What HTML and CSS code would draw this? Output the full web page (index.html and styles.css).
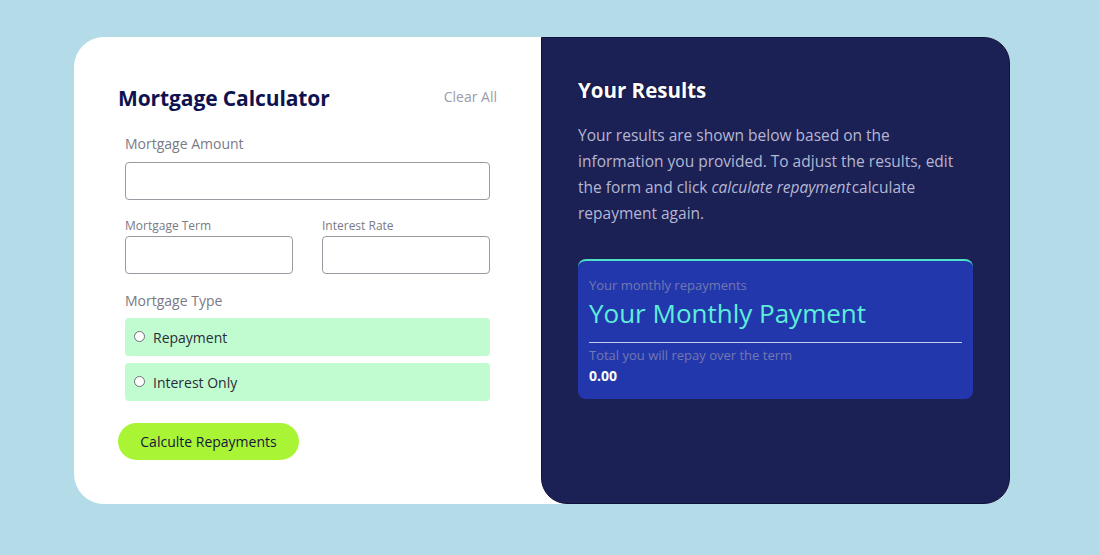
FILE: index.html
```html
<!DOCTYPE html>
<html lang="en">
<head>
<meta charset="utf-8">
<title>Mortgage Calculator</title>
<link rel="stylesheet" href="styles.css">
</head>
<body>
<main class="card">
  <section class="form-panel">
    <div class="form-head">
      <h1 class="title">Mortgage Calculator</h1>
      <a class="clear" href="#">Clear All</a>
    </div>
    <div class="fields">
      <label class="label">Mortgage Amount</label>
      <input class="input" type="text">
      <div class="row">
        <div class="col">
          <label class="label small">Mortgage Term</label>
          <input class="input" type="text">
        </div>
        <div class="col">
          <label class="label small">Interest Rate</label>
          <input class="input" type="text">
        </div>
      </div>
      <label class="label type-label">Mortgage Type</label>
      <label class="option"><span class="radio"></span>Repayment</label>
      <label class="option"><span class="radio"></span>Interest Only</label>
    </div>
    <button class="submit" type="button">Calculte Repayments</button>
  </section>
  <section class="results-panel">
    <h2 class="results-title">Your Results</h2>
    <p class="results-text">Your results are shown below based on the information you provided. To adjust the results, edit the form and click <em class="em">calculate repayment</em>calculate repayment again.</p>
    <div class="result-box">
      <div class="muted">Your monthly repayments</div>
      <div class="big">Your Monthly Payment</div>
      <hr class="divider">
      <div class="muted">Total you will repay over the term</div>
      <div class="total">0.00</div>
    </div>
  </section>
</main>
</body>
</html>
```
FILE: styles.css
```css
* { box-sizing: border-box; }
html, body { margin: 0; padding: 0; }
body {
  background: #b3dbe8;
  font-family: "Open Sans", "Noto Sans", sans-serif;
  width: 1100px;
  height: 555px;
  padding: 37px 0 0 74px;
}
.card {
  display: flex;
  width: 936px;
  height: 467px;
  background: #ffffff;
  border-radius: 30px 26px 26px 30px;
}
.form-panel {
  width: 468px;
  padding: 44px 44px 0 44px;
  display: flex;
  flex-direction: column;
}
.form-head {
  display: flex;
  justify-content: space-between;
  align-items: center;
  height: 34px;
  margin-bottom: 17px;
}
.title {
  margin: 0;
  font-size: 21px;
  font-weight: 700;
  color: #10124f;
  letter-spacing: -0.1px;
}
.clear {
  color: #9a9ca8;
  font-size: 14px;
  text-decoration: none;
  margin-top: -4px;
}
.fields {
  padding: 0 7px;
  display: flex;
  flex-direction: column;
}
.label {
  display: block;
  color: #7a7a86;
  font-size: 14px;
  line-height: 20px;
  margin-top: 2px;
  margin-bottom: 8px;
}
.label.small {
  font-size: 12px;
  line-height: 16px;
  margin: 0 0 2px 0;
}
.input {
  display: block;
  width: 100%;
  height: 38px;
  border: 1px solid #9a9aa2;
  border-radius: 4px;
  background: #fff;
  font: inherit;
}
.row {
  display: flex;
  gap: 29px;
  margin-top: 18px;
}
.col { flex: 1; }
.type-label {
  margin-top: 17px;
  margin-bottom: 7px;
}
.option {
  display: flex;
  align-items: center;
  height: 38px;
  background: #c1fcd0;
  border-radius: 4px;
  padding-left: 9px;
  color: #2b2b3a;
  font-size: 14px;
  margin-bottom: 7px;
}
.radio {
  width: 11px;
  height: 11px;
  border: 1px solid #6f6f78;
  border-radius: 50%;
  background: #fff;
  margin-right: 8px;
  margin-top: -1px;
}
.submit {
  align-self: flex-start;
  margin-top: 15px;
  width: 181px;
  height: 37px;
  border: none;
  border-radius: 19px;
  background: #a9f535;
  color: #14163f;
  font-family: inherit;
  font-size: 14px;
  padding: 0;
}
.results-panel {
  flex: 1;
  background: #1b2055;
  border: 1px solid #10123c;
  border-radius: 0 26px 26px 26px;
  padding: 36px 36px 0 36px;
}
.results-title {
  margin: 0;
  color: #ffffff;
  font-size: 20.5px;
  font-weight: 700;
  line-height: 32px;
  text-shadow: 0 0 2px rgba(0,0,0,0.6);
}
.results-text {
  margin: 16px 0 0 0;
  color: #b5b7d2;
  font-size: 15.5px;
  line-height: 26px;
  width: 380px;
}
.em { padding-right: 1px; }
.result-box {
  margin-top: 33px;
  width: 395px;
  background: #2337ac;
  border-top: 2px solid #4fe0c8;
  border-radius: 8px;
  padding: 15px 11px 11px 11px;
}
.muted {
  color: #7278b0;
  font-size: 13px;
  line-height: 18px;
}
.big {
  color: #5deedb;
  font-size: 26px;
  line-height: 38px;
}
.divider {
  border: none;
  border-top: 1.5px solid #c5cbef;
  margin: 10px 0 3px 0;
}
.total {
  color: #ffffff;
  font-size: 14px;
  font-weight: 700;
  line-height: 24px;
}
```
